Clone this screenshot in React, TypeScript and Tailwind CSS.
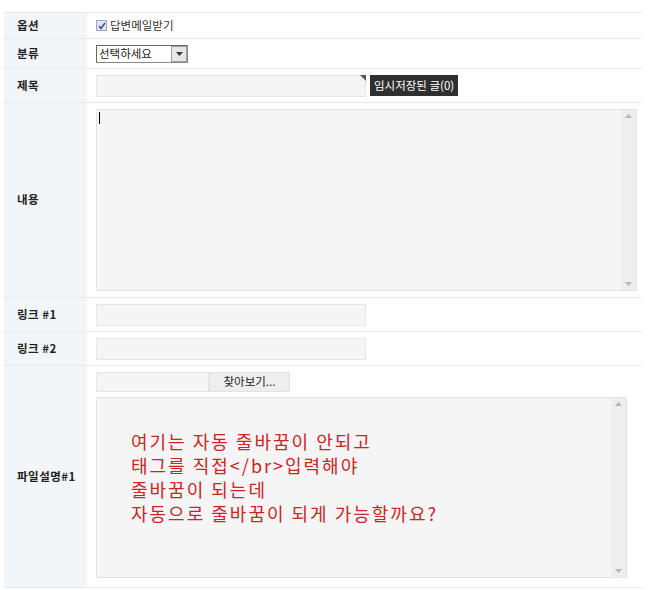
const font = "font-['Noto_Sans_CJK_KR',sans-serif]";

const Row = ({
  label,
  h,
  children,
}: {
  label: string;
  h: string;
  children?: React.ReactNode;
}) => (
  <div className={`flex border-b border-[#e9e9e9] ${h}`}>
    <div className="w-[83px] shrink-0 bg-[#f3f6f8] flex items-center pl-[13px] text-[11.5px] font-bold text-[#222] tracking-[0.5px]">
      {label}
    </div>
    <div className="flex-1 pl-[9px] flex items-center">{children}</div>
  </div>
);

const ScrollBar = () => (
  <div className="w-[15px] bg-[#eeeeee] flex flex-col justify-between items-center py-[4px]">
    <svg width="7" height="4" viewBox="0 0 7 4">
      <path d="M0 4 L3.5 0 L7 4 Z" fill="#b5b5b5" />
    </svg>
    <svg width="7" height="4" viewBox="0 0 7 4">
      <path d="M0 0 L3.5 4 L7 0 Z" fill="#b5b5b5" />
    </svg>
  </div>
);

const Field = ({ w }: { w: string }) => (
  <div className={`${w} h-[22px] bg-[#f5f5f5] border border-[#e6e6e6]`} />
);

export default function App() {
  return (
    <div className={`w-[650px] h-[590px] bg-white pt-[12px] pl-[4px] ${font}`}>
      <div className="w-[638px] border-t border-[#e9e9e9]">
        <Row label="옵션" h="h-[26px]">
          <div className="flex items-center gap-[3px] text-[11.5px] text-[#333]">
            <div className="w-[11px] h-[11px] border border-[#9aa6bf] bg-[#dfe5f3] flex items-center justify-center">
              <svg width="8" height="8" viewBox="0 0 8 8">
                <path d="M1 4 L3 6.5 L7 1" fill="none" stroke="#3a4a8a" strokeWidth="1.4" />
              </svg>
            </div>
            <span>답변메일받기</span>
          </div>
        </Row>
        <Row label="분류" h="h-[30px]">
          <div className="w-[92px] h-[18px] border border-[#8a8a8a] border-l-[#666] border-t-[#666] bg-white flex items-center justify-between text-[11.5px] text-[#222]">
            <span className="pl-[2px] leading-none">선택하세요</span>
            <div className="w-[16px] h-[16px] bg-[#e6e6e6] border border-[#a0a0a0] flex items-center justify-center">
              <svg width="7" height="4" viewBox="0 0 7 4">
                <path d="M0 0 L3.5 4 L7 0 Z" fill="#333" />
              </svg>
            </div>
          </div>
        </Row>
        <Row label="제목" h="h-[34px]">
          <div className="relative w-[270px] h-[22px] bg-[#f5f5f5] border border-[#e6e6e6]">
            <svg className="absolute right-[-1px] top-[-1px]" width="6" height="6" viewBox="0 0 6 6">
              <path d="M0 0 L6 0 L6 6 Z" fill="#555" />
            </svg>
          </div>
          <div className="ml-[4px] h-[21px] px-[4px] bg-[#2f2f2f] text-white text-[11.5px] flex items-center">
            임시저장된 글(0)
          </div>
        </Row>
        <Row label="내용" h="h-[195px]">
          <div className="w-[541px] h-[182px] bg-[#f5f5f5] border border-[#e3e3e3] flex">
            <div className="flex-1 pl-[2px] pt-[2px]">
              <div className="w-px h-[12px] bg-black" />
            </div>
            <ScrollBar />
          </div>
        </Row>
        <Row label="링크 #1" h="h-[34px]">
          <Field w="w-[270px]" />
        </Row>
        <Row label="링크 #2" h="h-[34px]">
          <Field w="w-[270px]" />
        </Row>
        <Row label="파일설명#1" h="h-[222px]">
          <div className="flex flex-col gap-[5px] self-start pt-[6px]">
            <div className="flex h-[20px]">
              <div className="w-[113px] bg-[#f5f5f5] border border-[#e6e6e6]" />
              <div className="w-[81px] bg-[#eeeeee] border border-[#e2e2e2] flex items-center justify-center text-[11.5px] text-[#222]">
                찾아보기...
              </div>
            </div>
            <div className="w-[531px] h-[181px] bg-[#f5f5f5] border border-[#e3e3e3] flex">
              <div className="flex-1 pl-[34px] pt-[31px] text-[18px] leading-[24px] tracking-[2px] text-[#cc2424]">
                <div>여기는 자동 줄바꿈이 안되고</div>
                <div>{"태그를 직접</br>입력해야"}</div>
                <div>줄바꿈이 되는데</div>
                <div>자동으로 줄바꿈이 되게 가능할까요?</div>
              </div>
              <ScrollBar />
            </div>
          </div>
        </Row>
      </div>
    </div>
  );
}
